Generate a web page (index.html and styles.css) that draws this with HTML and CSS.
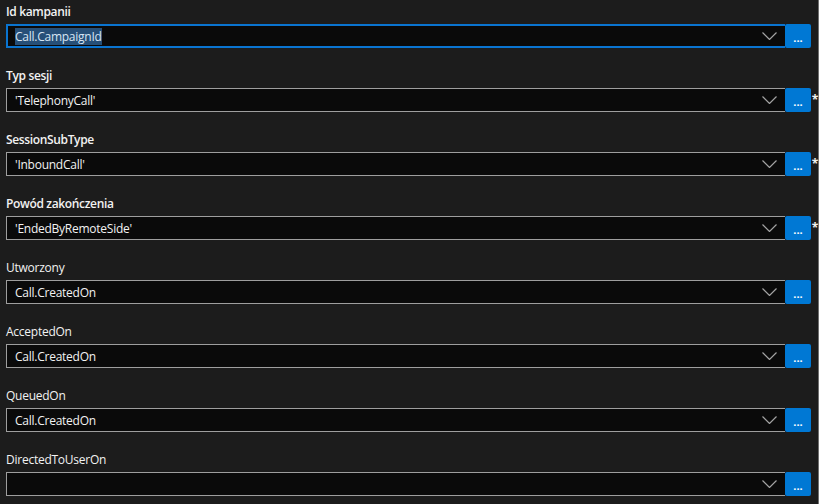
FILE: index.html
```html
<!DOCTYPE html>
<html lang="pl">
<head>
    <meta charset="UTF-8">
    <title>Parametry sesji</title>
    <link rel="stylesheet" href="styles.css">
</head>
<body>
    <div class="form">
        <div class="field">
            <div class="label strong">Id kampanii</div>
            <div class="row">
                <div class="combo focused"><span class="value"><span class="selected">Call.CampaignId</span></span><svg class="chevron" width="15" height="8" viewBox="0 0 15 8"><polyline points="0.5,0.5 7.5,7.5 14.5,0.5" /></svg></div>
                <div class="btn">...</div>
                <div class="req"></div>
            </div>
        </div>
        <div class="field">
            <div class="label strong">Typ sesji</div>
            <div class="row">
                <div class="combo"><span class="value">'TelephonyCall'</span><svg class="chevron" width="15" height="8" viewBox="0 0 15 8"><polyline points="0.5,0.5 7.5,7.5 14.5,0.5" /></svg></div>
                <div class="btn">...</div>
                <div class="req">*</div>
            </div>
        </div>
        <div class="field">
            <div class="label strong">SessionSubType</div>
            <div class="row">
                <div class="combo"><span class="value">'InboundCall'</span><svg class="chevron" width="15" height="8" viewBox="0 0 15 8"><polyline points="0.5,0.5 7.5,7.5 14.5,0.5" /></svg></div>
                <div class="btn">...</div>
                <div class="req">*</div>
            </div>
        </div>
        <div class="field">
            <div class="label strong">Powód zakończenia</div>
            <div class="row">
                <div class="combo"><span class="value">'EndedByRemoteSide'</span><svg class="chevron" width="15" height="8" viewBox="0 0 15 8"><polyline points="0.5,0.5 7.5,7.5 14.5,0.5" /></svg></div>
                <div class="btn">...</div>
                <div class="req">*</div>
            </div>
        </div>
        <div class="field">
            <div class="label">Utworzony</div>
            <div class="row">
                <div class="combo"><span class="value">Call.CreatedOn</span><svg class="chevron" width="15" height="8" viewBox="0 0 15 8"><polyline points="0.5,0.5 7.5,7.5 14.5,0.5" /></svg></div>
                <div class="btn">...</div>
                <div class="req"></div>
            </div>
        </div>
        <div class="field">
            <div class="label">AcceptedOn</div>
            <div class="row">
                <div class="combo"><span class="value">Call.CreatedOn</span><svg class="chevron" width="15" height="8" viewBox="0 0 15 8"><polyline points="0.5,0.5 7.5,7.5 14.5,0.5" /></svg></div>
                <div class="btn">...</div>
                <div class="req"></div>
            </div>
        </div>
        <div class="field">
            <div class="label">QueuedOn</div>
            <div class="row">
                <div class="combo"><span class="value">Call.CreatedOn</span><svg class="chevron" width="15" height="8" viewBox="0 0 15 8"><polyline points="0.5,0.5 7.5,7.5 14.5,0.5" /></svg></div>
                <div class="btn">...</div>
                <div class="req"></div>
            </div>
        </div>
        <div class="field">
            <div class="label">DirectedToUserOn</div>
            <div class="row">
                <div class="combo"><span class="value"></span><svg class="chevron" width="15" height="8" viewBox="0 0 15 8"><polyline points="0.5,0.5 7.5,7.5 14.5,0.5" /></svg></div>
                <div class="btn">...</div>
                <div class="req"></div>
            </div>
        </div>
    </div>
</body>
</html>
```
FILE: styles.css
```css
html, body {
    margin: 0;
    height: 100%;
}

body {
    font-family: "Open Sans", "Noto Sans", sans-serif;
    font-size: 12px;
    letter-spacing: -0.25px;
    color: #f2f2f2;
    background-color: #1c1c1c;
    overflow: hidden;
}

.form {
    height: 100%;
    border-right: 1px solid #707070;
    padding: 0 0 0 6px;
    box-sizing: border-box;
    width: 819px;
}

.field {
    height: 64px;
}

.label {
    height: 24px;
    line-height: 24px;
}

.label.strong {
    font-weight: 600;
    letter-spacing: -0.35px;
}

.row {
    display: flex;
    height: 24px;
}

.combo {
    flex: 1;
    display: flex;
    align-items: center;
    background-color: #0a0a0a;
    border: 1px solid #9e9e9e;
    border-right: none;
    box-sizing: border-box;
    padding-left: 8px;
    padding-right: 8px;
}

.combo.focused {
    border: 2px solid #0a74d0;
    border-right: none;
    padding-left: 7px;
}

.value {
    flex: 1;
    white-space: nowrap;
}

.selected {
    background-color: #264f78;
    color: #d8e6f4;
}

.chevron polyline {
    fill: none;
    stroke: #a3a3a3;
    stroke-width: 1.2;
}

.btn {
    width: 26px;
    background-color: #0078d4;
    border-radius: 2px;
    color: #fff;
    font-size: 11px;
    font-weight: 700;
    letter-spacing: 0;
    text-align: center;
    line-height: 28px;
    cursor: pointer;
    user-select: none;
}

.req {
    width: 7px;
    text-align: right;
    font-size: 12px;
    font-weight: 700;
    line-height: 24px;
}
```
